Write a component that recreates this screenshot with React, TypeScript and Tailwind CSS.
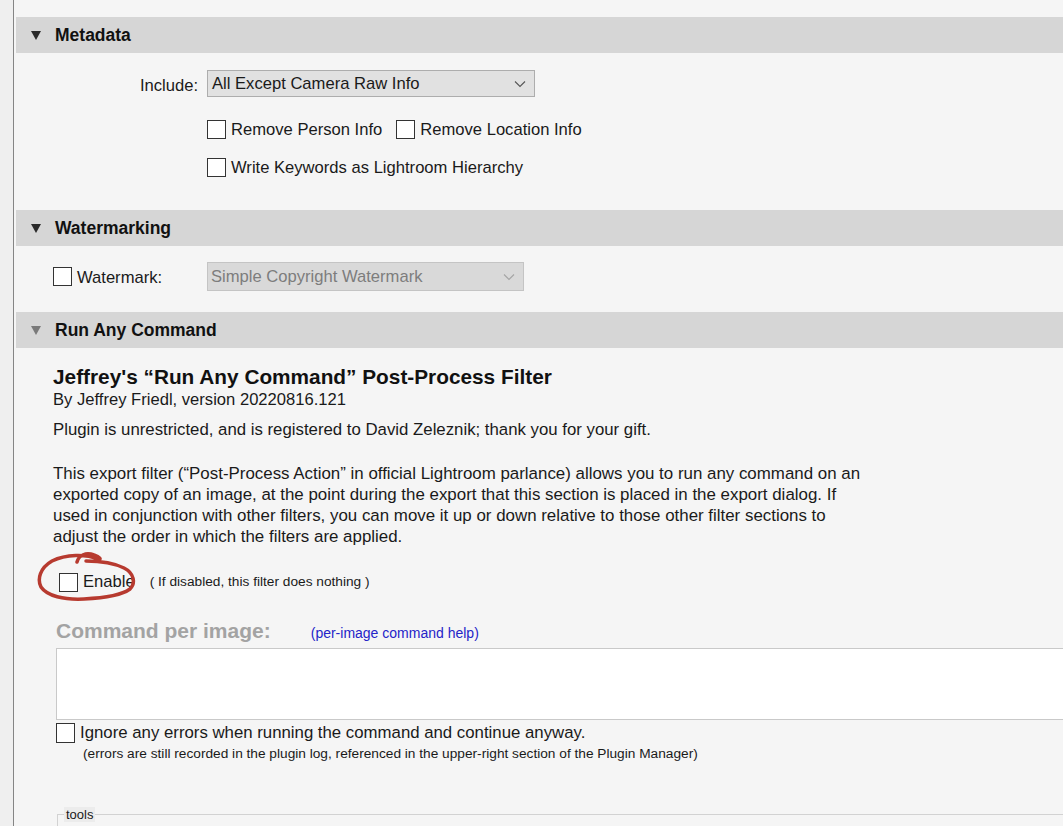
import React from "react";

const F = { fontFamily: '"Liberation Sans", Arial, sans-serif' };

function Tri({ light }: { light?: boolean }) {
  return (
    <svg width="10" height="9" viewBox="0 0 10 9" className="shrink-0">
      <polygon points="0,0 10,0 5,9" fill={light ? "#7a7a7a" : "#2a2a2a"} />
    </svg>
  );
}

function Header({ title, light }: { title: string; light?: boolean }) {
  return (
    <div className="ml-[2px] h-[36px] bg-[#d6d6d6] flex items-center pl-[15px] gap-[14px]">
      <Tri light={light} />
      <span className="text-[17.5px] font-bold text-[#111] mt-[1px]">{title}</span>
    </div>
  );
}

function Box({ className = "" }: { className?: string }) {
  return <div className={"w-[19px] h-[19px] border border-[#333] bg-white shrink-0 " + className} />;
}

function Chevron({ color }: { color: string }) {
  return (
    <svg width="12" height="8" viewBox="0 0 12 8">
      <polyline points="1,1.5 6,6.5 11,1.5" fill="none" stroke={color} strokeWidth="1.1" />
    </svg>
  );
}

export default function App() {
  return (
    <div className="h-[826px] w-[1063px] overflow-hidden flex bg-[#f5f5f5] text-[#1a1a1a]" style={F}>
      <div className="w-[13px] bg-[#efefef] shrink-0" />
      <div className="w-px bg-[#858585] shrink-0" />
      <div className="flex-1 pt-[17px]">
        {/* Metadata */}
        <Header title="Metadata" />
        <div className="flex flex-col pt-[17px] pb-[33px]">
          <div className="flex items-center h-[27px]">
            <span className="w-[193px] text-right pr-[9px] text-[16.6px] mt-[5px]">Include:</span>
            <div className="w-[328px] h-[27px] bg-[#e1e1e1] border border-[#adadad] flex items-center justify-between pl-[4px] pr-[8px] text-[16.6px]">
              <span className="mt-[2px]">All Except Camera Raw Info</span>
              <Chevron color="#555" />
            </div>
          </div>
          <div className="flex items-center h-[19px] mt-[23px] pl-[193px] text-[16.6px]">
            <Box />
            <span className="ml-[5px] mt-[2px]">Remove Person Info</span>
            <Box className="ml-[14px]" />
            <span className="ml-[5px] mt-[2px]">Remove Location Info</span>
          </div>
          <div className="flex items-center h-[19px] mt-[19px] pl-[193px] text-[16.6px]">
            <Box />
            <span className="ml-[5px] mt-[2px]">Write Keywords as Lightroom Hierarchy</span>
          </div>
        </div>

        {/* Watermarking */}
        <Header title="Watermarking" />
        <div className="flex items-center h-[29px] mt-[16px] mb-[21px] pl-[39px] text-[16.6px]">
          <Box />
          <span className="ml-[5px] w-[130px] mt-[3px]">Watermark:</span>
          <div className="w-[317px] h-[29px] bg-[#d9d9d9] border border-[#c4c4c4] flex items-center justify-between pl-[3px] pr-[8px] text-[#7d7d7d]">
            <span className="mt-[2px]">Simple Copyright Watermark</span>
            <Chevron color="#a5a5a5" />
          </div>
        </div>

        {/* Run Any Command */}
        <Header title="Run Any Command" light />
        <div className="flex flex-col pl-[39px] pt-[18px]">
          <div className="text-[20.8px] font-bold leading-[22px] text-[#111]">
            Jeffrey's “Run Any Command” Post-Process Filter
          </div>
          <div className="text-[16.6px] leading-[22px] mt-[1px]">By Jeffrey Friedl, version 20220816.121</div>
          <div className="text-[16.8px] leading-[22px] mt-[8px]">
            Plugin is unrestricted, and is registered to David Zeleznik; thank you for your gift.
          </div>
          <div className="text-[16.9px] leading-[21px] mt-[22px] w-[900px]">
            This export filter (“Post-Process Action” in official Lightroom parlance) allows you to run any command on an
            <br />
            exported copy of an image, at the point during the export that this section is placed in the export dialog. If
            <br />
            used in conjunction with other filters, you can move it up or down relative to those other filter sections to
            <br />
            adjust the order in which the filters are applied.
          </div>

          <div className="relative flex items-center h-[20px] mt-[25px] pl-[6px]">
            <Box />
            <span className="ml-[5px] text-[16.6px]">Enable</span>
            <span className="ml-[15px] text-[13.7px]">( If disabled, this filter does nothing )</span>
            <svg
              className="absolute left-[-17px] top-[-23px] pointer-events-none"
              width="110"
              height="60"
              viewBox="0 0 110 60"
            >
              <path
                d="M41 13 C 43 6, 50 3, 58 6 C 64 8, 66 11, 62 10 C 50 5, 30 5, 16 12 C 4 19, 1 30, 5 38 C 11 47, 28 51, 48 50 C 68 49, 86 46, 94 40 C 100 34, 98 24, 88 19 C 78 14, 64 12, 50 12"
                fill="none"
                stroke="#b73a2f"
                strokeWidth="3.5"
                strokeLinecap="round"
                strokeLinejoin="round"
              />
            </svg>
          </div>

          <div className="flex items-baseline h-[24px] mt-[27px] pl-[3px]">
            <span className="text-[21px] font-bold text-[#a3a3a3] leading-[24px]">Command per image:</span>
            <span className="ml-[40px] text-[14px] text-[#2424c8]">(per-image command help)</span>
          </div>

          <div className="ml-[3px] mt-[5px] h-[72px] bg-white border-y border-l border-[#c9c9c9]" />

          <div className="flex items-center h-[20px] mt-[3px] pl-[3px]">
            <Box className="h-[20px]" />
            <span className="ml-[5px] text-[16.8px]">Ignore any errors when running the command and continue anyway.</span>
          </div>
          <div className="pl-[30px] mt-[3px] text-[13.7px] leading-[16px]">
            (errors are still recorded in the plugin log, referenced in the upper-right section of the Plugin Manager)
          </div>

          <div className="relative ml-[4px] mt-[52px] h-[40px] border-t border-l border-[#d2d2d2]">
            <span className="absolute left-[6px] top-[-8px] bg-[#ececec] px-[2px] text-[13px] leading-[15px]">
              tools
            </span>
          </div>
        </div>
      </div>
    </div>
  );
}
